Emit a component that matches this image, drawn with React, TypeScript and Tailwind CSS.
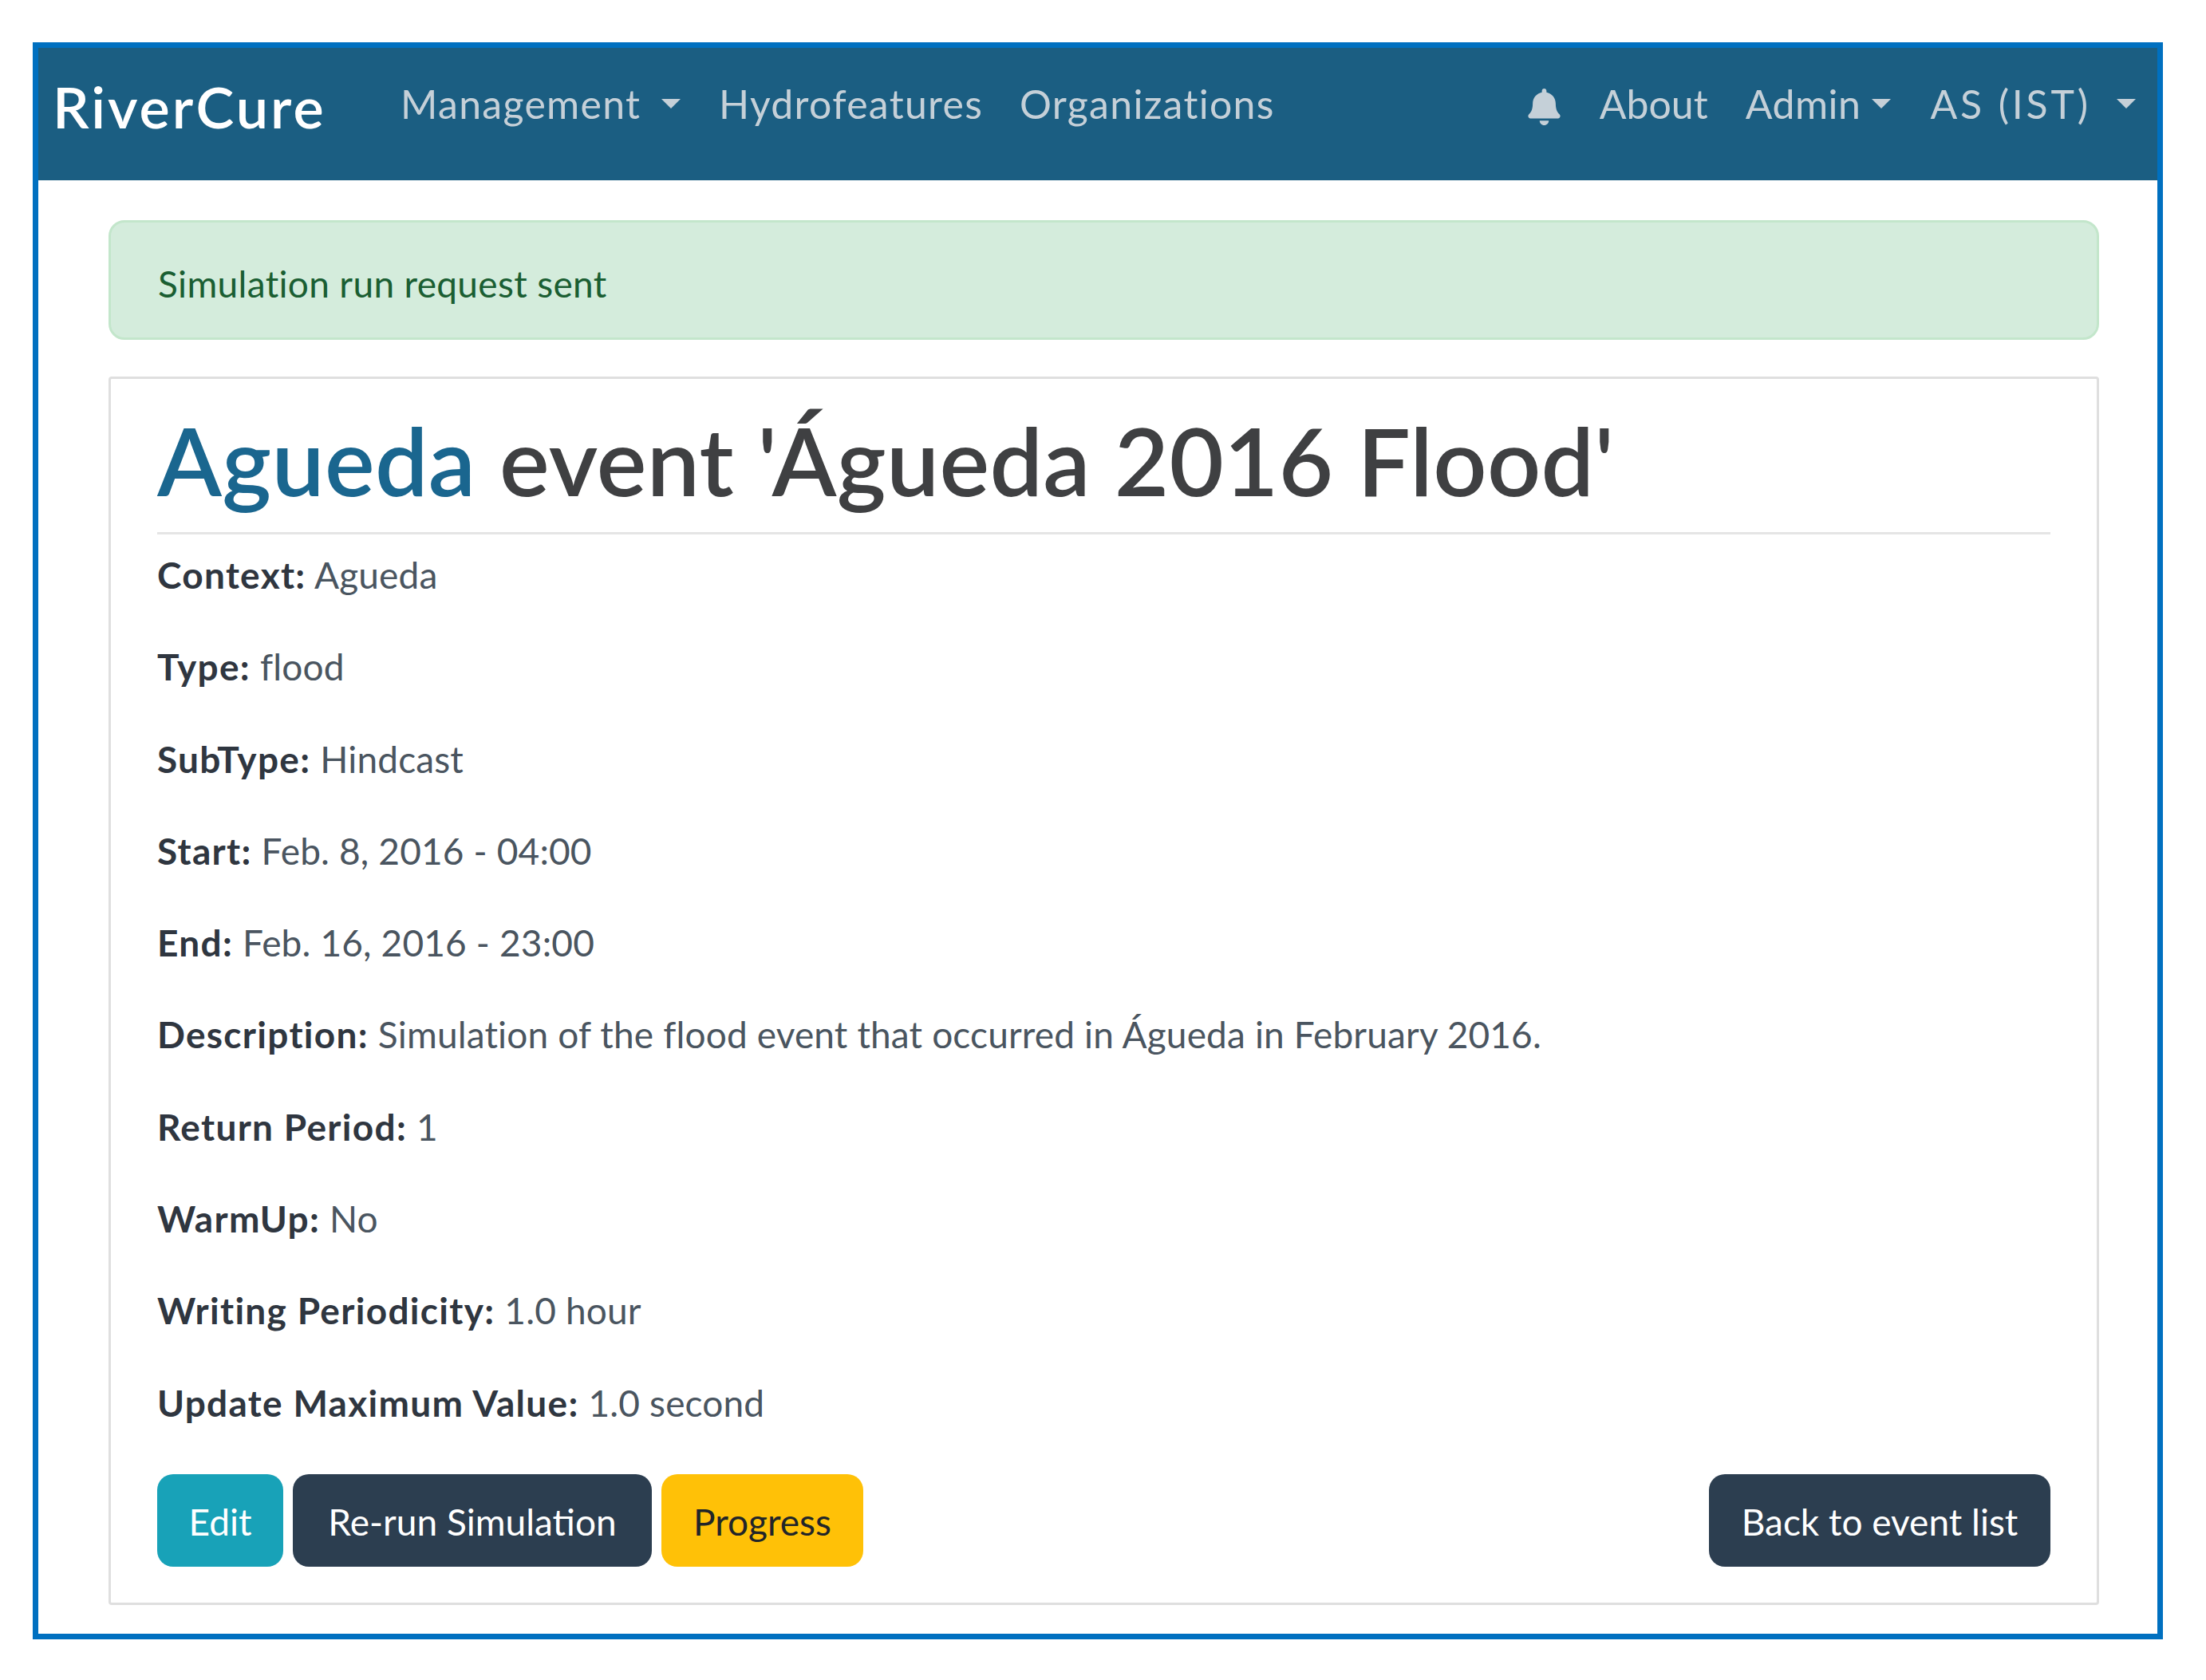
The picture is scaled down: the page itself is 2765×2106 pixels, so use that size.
import { FaBell } from 'react-icons/fa';

const fields = [
  { label: 'Context:', value: 'Agueda' },
  { label: 'Type:', value: 'flood' },
  { label: 'SubType:', value: 'Hindcast' },
  { label: 'Start:', value: 'Feb. 8, 2016 - 04:00' },
  { label: 'End:', value: 'Feb. 16, 2016 - 23:00' },
  { label: 'Description:', value: 'Simulation of the flood event that occurred in Águeda in February 2016.' },
  { label: 'Return Period:', value: '1' },
  { label: 'WarmUp:', value: 'No' },
  { label: 'Writing Periodicity:', value: '1.0 hour' },
  { label: 'Update Maximum Value:', value: '1.0 second' },
];

function Caret() {
  return <span className="block w-0 h-0 border-x-[12px] border-x-transparent border-t-[12px] border-t-[#c5d0d8]" />;
}

export default function App() {
  return (
    <div className="w-[2765px] h-[2106px] bg-white pt-[53px] pl-[41px] font-['Lato','Open_Sans',sans-serif]">
      <div className="w-[2670px] h-[2002px] border-[7px] border-[#0070c0] flex flex-col">
        <nav className="h-[166px] bg-[#1b5e82] flex items-center pl-[18px] pr-[27px] pb-[26px] text-[50px] tracking-[1.3px] whitespace-nowrap text-[#c5d0d8]">
          <span className="w-[436px] text-[72px] font-semibold tracking-[3px] text-white mt-[6px]">RiverCure</span>
          <span className="w-[327px]">Management</span>
          <Caret />
          <span className="ml-[48px] w-[328px]">Hydrofeatures</span>
          <span className="ml-[49px]">Organizations</span>
          <FaBell className="ml-auto w-[41px] h-[46px] mt-[8px]" />
          <span className="ml-[49px] tracking-[0px]">About</span>
          <span className="ml-[47px] tracking-[0.5px]">Admin</span>
          <span className="ml-[14px]"><Caret /></span>
          <span className="ml-[49px] tracking-[3.8px]">AS (IST)</span>
          <span className="ml-[32px]"><Caret /></span>
        </nav>
        <main className="pl-[88px] pr-[73px] pt-[50px] flex flex-col">
          <div className="h-[150px] bg-[#d4ecdc] border-[3px] border-[#c3e6cb] rounded-[20px] flex items-center px-[59px] pt-[8px] text-[46px] tracking-[0.33px] text-[#1a5e32]">
            Simulation run request sent
          </div>
          <section className="mt-[46px] h-[1540px] border-[3px] border-[#dfdfdf] rounded-[4px] px-[58px] flex flex-col">
            <h1 className="h-[195px] border-b-[3px] border-[#e5e5e5] pt-[4px] text-[118px] tracking-[0.3px] leading-[195px] font-semibold text-[#3f4042]">
              <span className="text-[#1a668f]">Agueda</span> event 'Águeda 2016 Flood'
            </h1>
            <div className="pt-[16px] text-[46px] tracking-[0.15px] leading-[69px] text-[#4a5560]">
              {fields.map((f) => (
                <p key={f.label} className="mb-[46.3px]">
                  <b className="font-bold tracking-[1.3px] text-[#2f3640]">{f.label}</b> {f.value}
                </p>
              ))}
            </div>
            <div className="mt-[9px] flex gap-[12px] text-[46px]">
              <button className="w-[158px] h-[116px] pt-[4px] rounded-[20px] bg-[#18a2b8] text-white">Edit</button>
              <button className="w-[450px] h-[116px] pt-[4px] rounded-[20px] bg-[#2c3e50] text-white">Re-run Simulation</button>
              <button className="w-[253px] h-[116px] pt-[4px] rounded-[20px] bg-[#ffc107] text-[#212529]">Progress</button>
              <button className="ml-auto w-[428px] h-[116px] pt-[4px] rounded-[20px] bg-[#2c3e50] text-white">Back to event list</button>
            </div>
          </section>
        </main>
      </div>
    </div>
  );
}
